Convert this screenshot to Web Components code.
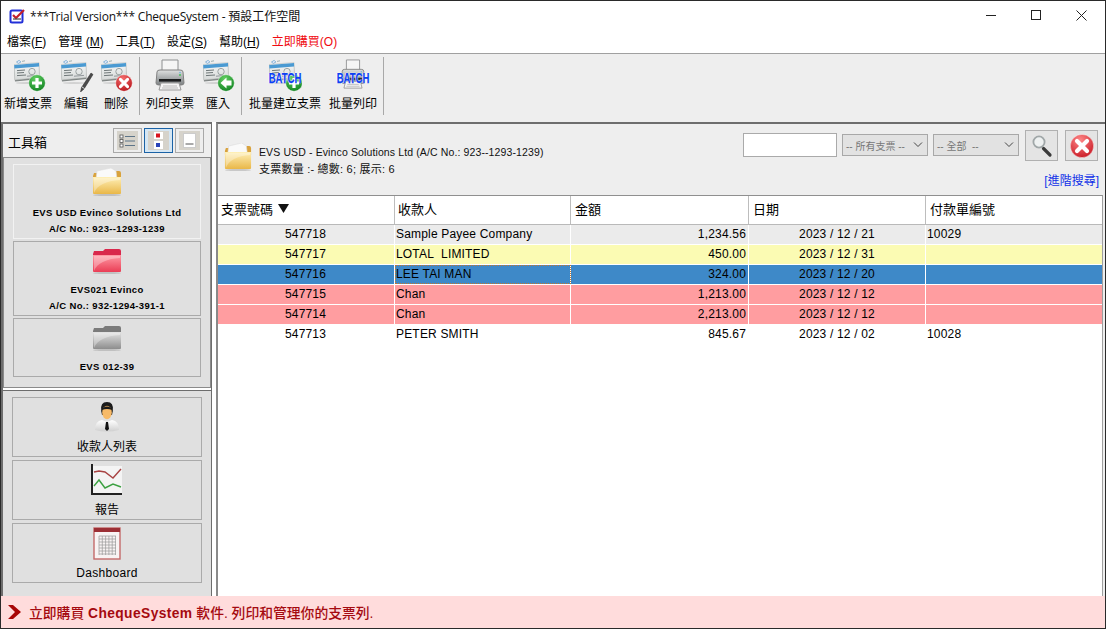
<!DOCTYPE html>
<html lang="zh-Hant"><head><meta charset="utf-8"><title>ChequeSystem</title>
<style>
html,body{margin:0;padding:0;background:#fff;overflow:hidden}
body{font-family:"Liberation Sans","Noto Sans CJK TC",sans-serif;font-size:12px;color:#000}
</style></head><body>
<app-window>
  <title-bar slot="title"></title-bar>
  <menu-bar slot="menu"></menu-bar>
  <tool-bar slot="tools"></tool-bar>
  <side-panel slot="side"></side-panel>
  <cheque-view slot="main"></cheque-view>
  <promo-bar slot="promo"></promo-bar>
</app-window>
<script>
const FONT='"Liberation Sans","Noto Sans CJK TC",sans-serif';
const cheque=`
<defs><linearGradient id="cb" x1="0" y1="0" x2="0" y2="1"><stop offset="0" stop-color="#f6f8f8"/><stop offset="1" stop-color="#d6d9d8"/></linearGradient></defs>
<ellipse cx="13" cy="24" rx="11" ry="1" fill="#bbb" opacity=".55"/>
<path d="M0 7 L25 5 L25.5 20 L1 22.6 Z" fill="#7f8584"/>
<path d="M0 5.5 L25 3.5 L25.4 18.5 L.8 21 Z" fill="url(#cb)" stroke="#b2b6b5" stroke-width=".5"/>
<path d="M.2 6 L25 4 L25.1 7.5 L.4 9.5 Z" fill="#4a9ad2"/>
<path d="M3 11.6 L11 11 M3 14 L10 13.5 M3 16.6 L12 16" stroke="#6f7778" stroke-width="1"/>
<circle cx="18" cy="12.6" r="3.2" fill="none" stroke="#929a9a" stroke-width=".9"/>
<path d="M13 17.2 L23 16.4" stroke="#8a9094" stroke-width=".9"/>
<path d="M2.5 3 l2.6-1.6 1.8 1.6 -2.6 1.4z" fill="#eef" stroke="#5b9cc9" stroke-width=".7"/><path d="M8 2.4 l3-.6" stroke="#9aa" stroke-width=".9"/>`;
const badge=(c1,c2,inner,cx=23,cy=24,r=8.3)=>`
<defs><radialGradient id="b" cx=".42" cy=".25" r=".85"><stop offset="0" stop-color="${c1}"/><stop offset="1" stop-color="${c2}"/></radialGradient></defs>
<circle cx="${cx}" cy="${cy}" r="${r}" fill="url(#b)" stroke="#fff" stroke-width=".4"/>${inner}`;
const plus=(x=23,y=24)=>`<path d="M${x} ${y-5}V${y+5}M${x-5} ${y}H${x+5}" stroke="#fff" stroke-width="3.2"/>`;
const cross=(x=23,y=24,s=3.6,w=3)=>`<path d="M${x-s} ${y-s}L${x+s} ${y+s}M${x+s} ${y-s}L${x-s} ${y+s}" stroke="#fff" stroke-width="${w}" stroke-linecap="round"/>`;
const printer=`
<defs><linearGradient id="p" x1="0" y1="0" x2="0" y2="1"><stop offset="0" stop-color="#dfe1e1"/><stop offset=".55" stop-color="#a6aaab"/><stop offset="1" stop-color="#7d8183"/></linearGradient></defs>
<path d="M9 1H25V13H9Z" fill="#f5f5f5" stroke="#8e9091"/>
<path d="M4 13 Q4 11 7 11H27Q30 11 30 13L31 24Q31 26 28 26H6Q3 26 3 24Z" fill="url(#p)" stroke="#808080"/>
<rect x="6" y="20" width="22" height="2.6" fill="#1d1f20"/>
<path d="M8 24H26L28 31H6Z" fill="#f6f6f6" stroke="#999"/>
<path d="M10 27H24M9 29H25" stroke="#bbb"/>
<circle cx="27" cy="16" r="1" fill="#47c15a"/><circle cx="27" cy="13.6" r=".8" fill="#6fb3e0"/>`;
const folder=(top,a,b,sheet)=>`
<defs><linearGradient id="f" x1="0" y1="0" x2="0" y2="1"><stop offset="0" stop-color="${a}"/><stop offset="1" stop-color="${b}"/></linearGradient></defs>
<ellipse cx="15" cy="27" rx="14" ry="1.2" fill="#999" opacity=".45"/>
<path d="M1 8 L2 5 H11 L13 3 H27 Q29 3 29 5 V12 H1Z" fill="${top}"/>
${sheet?`<path d="M4 11 L5 3 L19 0 L24 3 L25 11Z" fill="#fafafa" stroke="#ddd" stroke-width=".6"/>`:''}
<path d="M1 9 H29 L29 25 Q29 26 28 26 H2 Q1 26 1 25Z" fill="url(#f)"/>
<path d="M2 25 C5 17 14 13 28 12 V10 H2Z" fill="#fff" opacity=".32"/>`;
const ICONS={
 add:[33,33,cheque+badge('#63d063','#0b7d1d',plus())],
 edit:[33,33,cheque+`<path d="M30 14 L32 15.5 L23 30 L19.5 33 L20.5 28.5Z" fill="#4a4a4a" stroke="#222" stroke-width=".5"/><path d="M21 28l2.6 1.6" stroke="#ddd"/>`],
 del:[33,33,cheque+badge('#f66f6f','#b30d14',cross())],
 print:[34,33,printer],
 imp:[33,33,cheque+badge('#63d063','#0b7d1d',`<path d="M17.5 24 L23.5 18.5 V21.5 H28.5 V26.5 H23.5 V29.5Z" fill="#fff"/>`)],
 batchadd:[33,33,cheque+badge('#63d063','#0b7d1d',plus(25,24),25,24)],
 batchprint:[34,33,printer]
};
const extra={batchadd:'BATCH',batchprint:'BATCH'};
class AppIcon extends HTMLElement{connectedCallback(){
 const r=this.attachShadow({mode:'open'});const n=this.getAttribute('name');
 let w,h,b;
 if(ICONS[n]){[w,h,b]=ICONS[n];}
 if(n==='folder-y'){[w,h,b]=[30,28,folder('#d9a23c','#fff0b8','#e9b748',true)];}
 if(n==='folder-r'){[w,h,b]=[30,28,folder('#d9284c','#ff9aa5','#ea3d55',false)];}
 if(n==='folder-g'){[w,h,b]=[30,28,folder('#7b7b7b','#e4e4e4','#8d8d8d',false)];}
 if(n==='person'){[w,h,b]=[26,30,`<defs><linearGradient id="s" x1="0" y1="0" x2="0" y2="1"><stop offset="0" stop-color="#fff"/><stop offset="1" stop-color="#cfcfcf"/></linearGradient></defs>
   <path d="M1 28 Q1 19 8 18 L13 20 L18 18 Q25 19 25 28 Q13 31 1 28Z" fill="url(#s)"/>
   <path d="M12 20h2l1 7-2 2-2-2z" fill="#111"/>
   <path d="M7.2 9 Q6 0 13 0 Q20 0 18.8 9 L18 13 H8Z" fill="#1b1b1b"/>
   <ellipse cx="13" cy="10.5" rx="4.8" ry="6.8" fill="#f7ba68"/>
   <path d="M8 8 Q9 4.5 13 4.5 Q17 4.5 18 8 Q13 5.8 8 8Z" fill="#1b1b1b"/>`];}
 if(n==='chart'){[w,h,b]=[32,32,`<rect x="2" y="2" width="29" height="28" fill="#f4f4f4"/><path d="M1 0V30H31" fill="none" stroke="#222" stroke-width="2"/>
   <path d="M3 8 L8 7 L14 8 L22 14 L30 5" fill="none" stroke="#a84343" stroke-width="1.4"/>
   <path d="M3 22 L8 16 L14 24 L22 20 L30 23" fill="none" stroke="#3da142" stroke-width="1.4"/>`];}
 if(n==='grid'){let l='';for(let i=0;i<6;i++)l+=`<path d="M${6+i*3.3} 9V28" stroke="#999" stroke-width=".7"/>`;for(let i=0;i<7;i++)l+=`<path d="M6 ${9+i*3}H23" stroke="#999" stroke-width=".7"/>`;
   [w,h,b]=[28,33,`<rect x="1" y="1" width="26" height="31" fill="#f8f3f3" stroke="#c46a6a" stroke-width="1.4"/><rect x="1" y="1" width="26" height="4" fill="#9c2f35"/>${l}`];}
 if(n==='search'){[w,h,b]=[22,24,`<path d="M12.5 14.5 L19 21" stroke="#3a3a3a" stroke-width="3.2" stroke-linecap="round"/><circle cx="8" cy="8" r="5.6" fill="#eef1f1" stroke="#a0a7a8" stroke-width="1.8"/>`];}
 if(n==='close'){[w,h,b]=[26,26,badge('#f88','#c4101c',cross(13,13,5,4.2),13,13,11.6)];}
 if(n==='logo'){[w,h,b]=[16,16,`<rect x="1.5" y="2.5" width="12" height="12" rx="1.5" fill="#fff" stroke="#2230d8" stroke-width="2"/><path d="M4 7 L7 10 L15 2" fill="none" stroke="#c2202a" stroke-width="2.2"/><path d="M4 11H12" stroke="#444" stroke-width="1.2"/>`];}
 const sw=this.getAttribute('w')||w, sh=this.getAttribute('h')||h;
 r.innerHTML=`<style>:host{display:block;width:${sw}px;height:${sh}px;position:relative;flex:none}svg{display:block}
 b{position:absolute;left:50%;top:19px;transform:translate(-50%,-50%) scaleX(.68);font:bold 14px/14px ${FONT};color:#0c3ff2;-webkit-text-stroke:.25px #0c3ff2;text-shadow:0 0 1px #fff,0 0 1px #fff,0 0 2px #fff}</style>
 <svg width="${sw}" height="${sh}" viewBox="0 0 ${w} ${h}" preserveAspectRatio="none">${b}</svg>${extra[n]?`<b>${extra[n]}</b>`:''}`;
}}
customElements.define('app-icon',AppIcon);

customElements.define('app-window',class extends HTMLElement{constructor(){super();this.attachShadow({mode:'open'}).innerHTML=`
<style>:host{display:flex;flex-direction:column;box-sizing:border-box;width:1106px;height:629px;border:1px solid #2a2a2a;background:#fff}
.main{flex:1;display:flex;min-height:0}</style>
<slot name="title"></slot><slot name="menu"></slot><slot name="tools"></slot>
<div class="main"><slot name="side"></slot><slot name="main"></slot></div><slot name="promo"></slot>`}});

customElements.define('title-bar',class extends HTMLElement{constructor(){super();this.attachShadow({mode:'open'}).innerHTML=`
<style>:host{display:flex;align-items:center;height:29px;padding-left:8px;background:#fff;font:12px "Open Sans","Noto Sans CJK TC",sans-serif;color:#111}
.t{flex:1;margin-left:5px;margin-top:1px;white-space:pre}.t span{letter-spacing:-.22px}
.b{display:flex;align-items:center;justify-content:center;width:45px;height:29px;flex:none}.b svg{display:block}
.ctl{display:flex;margin-right:1px}</style>
<app-icon name="logo"></app-icon><div class="t"><span>***Trial Version*** ChequeSystem - </span>預設工作空間</div>
<div class="ctl">
<div class="b"><svg width="11" height="11"><path d="M0 5.5H10" stroke="#222"/></svg></div>
<div class="b"><svg width="11" height="11"><rect x=".5" y=".5" width="9" height="9" fill="none" stroke="#222"/></svg></div>
<div class="b"><svg width="11" height="11"><path d="M.5 .5L10.5 10.5M10.5 .5L.5 10.5" stroke="#222"/></svg></div>
</div>`}});

customElements.define('menu-bar',class extends HTMLElement{constructor(){super();this.attachShadow({mode:'open'}).innerHTML=`
<style>:host{display:flex;align-items:center;box-sizing:border-box;height:24px;padding:0 0 2px 6px;gap:12px;background:#fff;border-bottom:1px solid #a0a0a0;font:12px ${FONT}}
u{text-underline-offset:1px}.r{color:#f00a10;letter-spacing:.02px}</style>
<span>檔案(<u>F</u>)</span><span>管理 (<u>M</u>)</span><span>工具(<u>T</u>)</span><span>設定(<u>S</u>)</span><span>幫助(<u>H</u>)</span><span class="r">立即購買(O)</span>`}});

class ToolBtn extends HTMLElement{connectedCallback(){
 const r=this.attachShadow({mode:'open'});
 const iw=this.getAttribute('iw'),ih=this.getAttribute('ih');
 r.innerHTML=`<style>:host{display:flex;flex-direction:column;align-items:center;width:${this.getAttribute('width')}px;flex:none;font:12px ${FONT};white-space:nowrap}
 .i{height:33px;margin-top:5px;padding-left:${this.getAttribute('shift')||0}px;display:flex;align-items:flex-start;justify-content:center}.l{margin-top:4px;line-height:16px}</style>
 <div class="i"><app-icon name="${this.getAttribute('icon')}" ${iw?`w="${iw}" h="${ih}"`:''}></app-icon></div><div class="l">${this.getAttribute('label')}</div>`;
}}
customElements.define('tool-btn',ToolBtn);
customElements.define('tool-bar',class extends HTMLElement{constructor(){super();this.attachShadow({mode:'open'}).innerHTML=`
<style>:host{display:flex;align-items:flex-start;box-sizing:border-box;height:68px;background:#eee;padding-left:3px}
.s{width:1px;height:58px;margin-top:3px;background:#a8a8a8;flex:none}</style>
<tool-btn width="48" shift="4" icon="add" label="新增支票"></tool-btn>
<tool-btn width="48" shift="2" icon="edit" label="編輯"></tool-btn>
<tool-btn width="32" shift="3" icon="del" label="刪除"></tool-btn>
<div class="s" style="margin-left:7px"></div>
<tool-btn width="60" icon="print" label="列印支票"></tool-btn>
<tool-btn width="36" shift="2" icon="imp" label="匯入"></tool-btn>
<div class="s" style="margin-left:5px"></div>
<tool-btn width="86" icon="batchadd" label="批量建立支票"></tool-btn>
<tool-btn width="50" icon="batchprint" iw="28" ih="31" label="批量列印"></tool-btn>
<div class="s" style="margin-left:5px"></div>`}});

class BankCard extends HTMLElement{connectedCallback(){
 const a=this.hasAttribute('active');
 this.attachShadow({mode:'open'}).innerHTML=`<style>:host{display:flex;flex-direction:column;align-items:center;box-sizing:border-box;height:${this.getAttribute('height')}px;border:1px solid ${a?'#f2f2f2':'#aaa'};font:bold 9.5px ${FONT};letter-spacing:.35px;padding-top:${this.getAttribute('pad')}px;flex:none}
 .l1{margin-top:${this.getAttribute('gap')}px;line-height:16px}.l2{line-height:16px}</style>
 <app-icon name="${this.getAttribute('icon')}"></app-icon><div class="l1">${this.getAttribute('name')}</div>${this.getAttribute('ac')?`<div class="l2">${this.getAttribute('ac')}</div>`:''}`;
}}
customElements.define('bank-card',BankCard);
class NavBtn extends HTMLElement{connectedCallback(){
 this.attachShadow({mode:'open'}).innerHTML=`<style>:host{display:flex;flex-direction:column;align-items:center;box-sizing:border-box;height:60px;border:1px solid #aaa;font:12px ${FONT};flex:none;letter-spacing:${this.getAttribute('ls')||0}}
 .i{height:36px;display:flex;align-items:center;justify-content:center;margin-top:1px}.l{margin-top:4px;line-height:16px}</style>
 <div class="i"><app-icon name="${this.getAttribute('icon')}"></app-icon></div><div class="l">${this.getAttribute('label')}</div>`;
}}
customElements.define('nav-btn',NavBtn);

customElements.define('side-panel',class extends HTMLElement{constructor(){super();this.attachShadow({mode:'open'}).innerHTML=`
<style>:host{display:flex;flex-direction:column;box-sizing:border-box;width:215px;flex:none;background:#fff;padding-right:4px}
.wrap{flex:1;display:flex;flex-direction:column;box-sizing:border-box;border-left:2px solid #6d6d6d;border-top:2px solid #6d6d6d;border-right:1px solid #6d6d6d;background:#eee;min-height:0}
.hd{display:flex;align-items:center;height:33px;box-sizing:border-box;padding:0 7px 0 5px;font:13px ${FONT};flex:none}
.hd span{flex:1;margin-top:2px}
.tog{width:29px;height:25px;box-sizing:border-box;border:1px solid #a8a8a8;margin-left:2px;display:flex;align-items:center;justify-content:center;background:#eee}
.tog.on{border-color:#1a62a6;background:#d5e6f3}
.tog i{display:flex;align-items:center;justify-content:center;width:21px;height:19px;background:#d6d3cb}
.box{box-sizing:border-box;height:231px;border:1px solid #8a8a8a;background:#e0e0e0;padding:6px 9px 0 9px;display:flex;flex-direction:column;gap:2px;flex:none}
.low{flex:1;border-top:1px solid #6d6d6d;background:#e0e0e0;padding:6px 9px 0 9px;display:flex;flex-direction:column;gap:3px}
</style>
<div class="wrap">
<div class="hd"><span>工具箱</span>
<div class="tog"><i><svg width="17" height="14"><rect x="1" y="1" width="3" height="3" fill="#fff" stroke="#555" stroke-width=".8"/><rect x="1" y="5.5" width="3" height="3" fill="#fff" stroke="#555" stroke-width=".8"/><rect x="1" y="10" width="3" height="3" fill="#fff" stroke="#555" stroke-width=".8"/><path d="M6 2.5H16M6 7H16M6 11.5H16" stroke="#5d7488"/></svg></i></div>
<div class="tog on"><i><svg width="9" height="17"><rect x="0" y="0" width="9" height="7" fill="#fff"/><rect x="2" y="1.5" width="4" height="4" fill="#d8141c"/><rect x="0" y="9" width="9" height="8" fill="#fff"/><rect x="2" y="11" width="4" height="4" fill="#2a45b8"/></svg></i></div>
<div class="tog"><i><svg width="13" height="15"><rect x=".5" y=".5" width="12" height="14" fill="#fff" stroke="#ccc"/><path d="M2.5 11H10.5" stroke="#555"/></svg></i></div>
</div>
<div class="box">
<bank-card active height="75" pad="3" gap="9" icon="folder-y" name="EVS USD Evinco Solutions Ltd" ac="A/C No.: 923--1293-1239"></bank-card>
<bank-card height="75" pad="4" gap="8" icon="folder-r" name="EVS021 Evinco" ac="A/C No.: 932-1294-391-1"></bank-card>
<bank-card height="59" pad="4" gap="8" icon="folder-g" name="EVS 012-39"></bank-card>
</div>
<div style="height:2px;background:#fff;flex:none"></div>
<div class="low">
<nav-btn icon="person" label="收款人列表"></nav-btn>
<nav-btn icon="chart" label="報告"></nav-btn>
<nav-btn icon="grid" label="Dashboard" ls=".3px"></nav-btn>
</div>
</div>`}});

const ROWS=[
['547718','Sample Payee Company','1,234.56','2023 / 12 / 21','10029','gr'],
['547717','LOTAL&nbsp; LIMITED','450.00','2023 / 12 / 31','','ye'],
['547716','LEE TAI MAN','324.00','2023 / 12 / 20','','bl'],
['547715','Chan','1,213.00','2023 / 12 / 12','','pk'],
['547714','Chan','2,213.00','2023 / 12 / 12','','pk'],
['547713','PETER SMITH','845.67','2023 / 12 / 02','10028','wh']];
customElements.define('cheque-table',class extends HTMLElement{constructor(){super();
 const cols='grid-template-columns:177px 176px 178px 177px 1fr';
 const rows=ROWS.map(r=>`<div class="row ${r[5]}"><div class="c num">${r[0]}</div><div class="c pay${r[5]==='bl'?' foc':''}">${r[1]}</div><div class="c amt">${r[2]}</div><div class="c dt">${r[3]}</div><div class="c">${r[4]}</div></div>`).join('');
 this.attachShadow({mode:'open'}).innerHTML=`
<style>:host{display:block;flex:1;box-sizing:border-box;min-height:0;background:#fff;border-top:1px solid #8f8f8f;border-right:1px solid #a0a0a0;font:12px ${FONT};letter-spacing:.18px}
.h,.row{display:grid;${cols}}
.h{height:29px;box-sizing:border-box;border-bottom:1px solid #b9b9b9}
.h div{display:flex;align-items:center;padding:0 0 4px 3px;border-right:1px solid #bdbdbd;font-size:13px;letter-spacing:0;box-sizing:border-box}
.h div:nth-child(n+3){padding-left:4px}
.h div:last-child{border-right:0}
.row{height:20px;box-sizing:border-box;border-bottom:1px solid #fff}
.wh{border-bottom:0}
.c{display:flex;align-items:center;padding:0 2px 0 1px;border-right:1px solid #fff;white-space:nowrap;box-sizing:border-box;line-height:19px;height:19px}
.c:last-child{border-right:0}
.num{justify-content:center;padding:0 1px 0 0}.amt{justify-content:flex-end}.dt{justify-content:center;padding:0}
.gr{background:#ebebeb}.ye{background:#fbfbb3}.bl{background:#3e89c8}.pk{background:#ff9da0}
.wh .c{border-right-color:transparent}
.foc{outline:1px dotted #c9772a;outline-offset:-1px}
</style>
<div class="h"><div>支票號碼<svg width="11" height="9" style="margin-left:5px"><path d="M0 0H11L5.5 9Z" fill="#111"/></svg></div><div>收款人</div><div>金額</div><div>日期</div><div>付款單編號</div></div>${rows}`}});

customElements.define('cheque-view',class extends HTMLElement{constructor(){super();this.attachShadow({mode:'open'}).innerHTML=`
<style>:host{display:flex;flex-direction:column;flex:1;min-width:0;box-sizing:border-box;border-left:2px solid #8a8a8a;border-top:2px solid #6d6d6d;background:#eee;padding-right:2px;font:11px ${FONT}}
.top{height:71px;flex:none;display:flex;box-sizing:border-box;padding-left:6px}
.info{display:flex;align-items:flex-start;padding-top:19px}
.txt{margin-left:7px;margin-top:1px;line-height:17px;font-size:10.5px;letter-spacing:.12px;color:#111}
.txt span{font-size:11px;letter-spacing:.22px}
.ctl{margin-left:auto;display:flex;flex-direction:column;align-items:flex-end;padding-right:5px}
.row{display:flex;align-items:flex-start;margin-top:6px}
input{box-sizing:border-box;width:94px;height:24px;border:1px solid #aaa;background:#fff;margin:3px 5px 0 0;padding:0}
.sel{box-sizing:border-box;display:flex;align-items:center;justify-content:space-between;width:86px;height:22px;margin:4px 5px 0 0;border:1px solid #a8a8a8;background:#e2e2e2;color:#777;font-size:10px;padding:0 4px 0 3px;white-space:nowrap}
.btn{box-sizing:border-box;width:33px;height:31px;border:1px solid #b0b0b0;background:#e4e4e4;display:flex;align-items:center;justify-content:center;margin-left:1px}
.btn+.btn{margin-left:7px}
a{color:#1232e8;text-decoration:none;font-size:12px;margin-top:13px;margin-right:-1px;line-height:14px}
</style>
<div class="top">
 <div class="info"><app-icon name="folder-y" w="28" h="28"></app-icon><div class="txt">EVS USD - Evinco Solutions Ltd (A/C No.: 923--1293-1239)<br><span>支票數量 :- 總數: 6; 展示: 6</span></div></div>
 <div class="ctl"><div class="row"><input aria-label="搜尋"><div class="sel"><span>-- 所有支票 --</span><svg width="10" height="6"><path d="M1 .5L5 4.5L9 .5" fill="none" stroke="#444"/></svg></div><div class="sel"><span>-- 全部&nbsp; --</span><svg width="10" height="6"><path d="M1 .5L5 4.5L9 .5" fill="none" stroke="#444"/></svg></div>
 <div class="btn"><app-icon name="search"></app-icon></div><div class="btn"><app-icon name="close"></app-icon></div></div>
 <a href="#">[進階搜尋]</a></div>
</div>
<cheque-table></cheque-table>`}});

customElements.define('promo-bar',class extends HTMLElement{constructor(){super();this.attachShadow({mode:'open'}).innerHTML=`
<style>:host{display:flex;align-items:center;box-sizing:border-box;height:32px;background:#ffdcdc;padding-left:7px;font:500 13.8px ${FONT};color:#a50a10;flex:none}
svg{margin-right:8px;flex:none}span{white-space:pre}b{font-weight:bold;letter-spacing:.4px}</style>
<svg width="13" height="14"><path d="M0 0H5L13 7L5 14H0L7 7Z" fill="#a80606"/></svg><span>立即購買 <b>ChequeSystem</b> 軟件. 列印和管理你的支票列.</span>`}});
</script>
</body></html>
